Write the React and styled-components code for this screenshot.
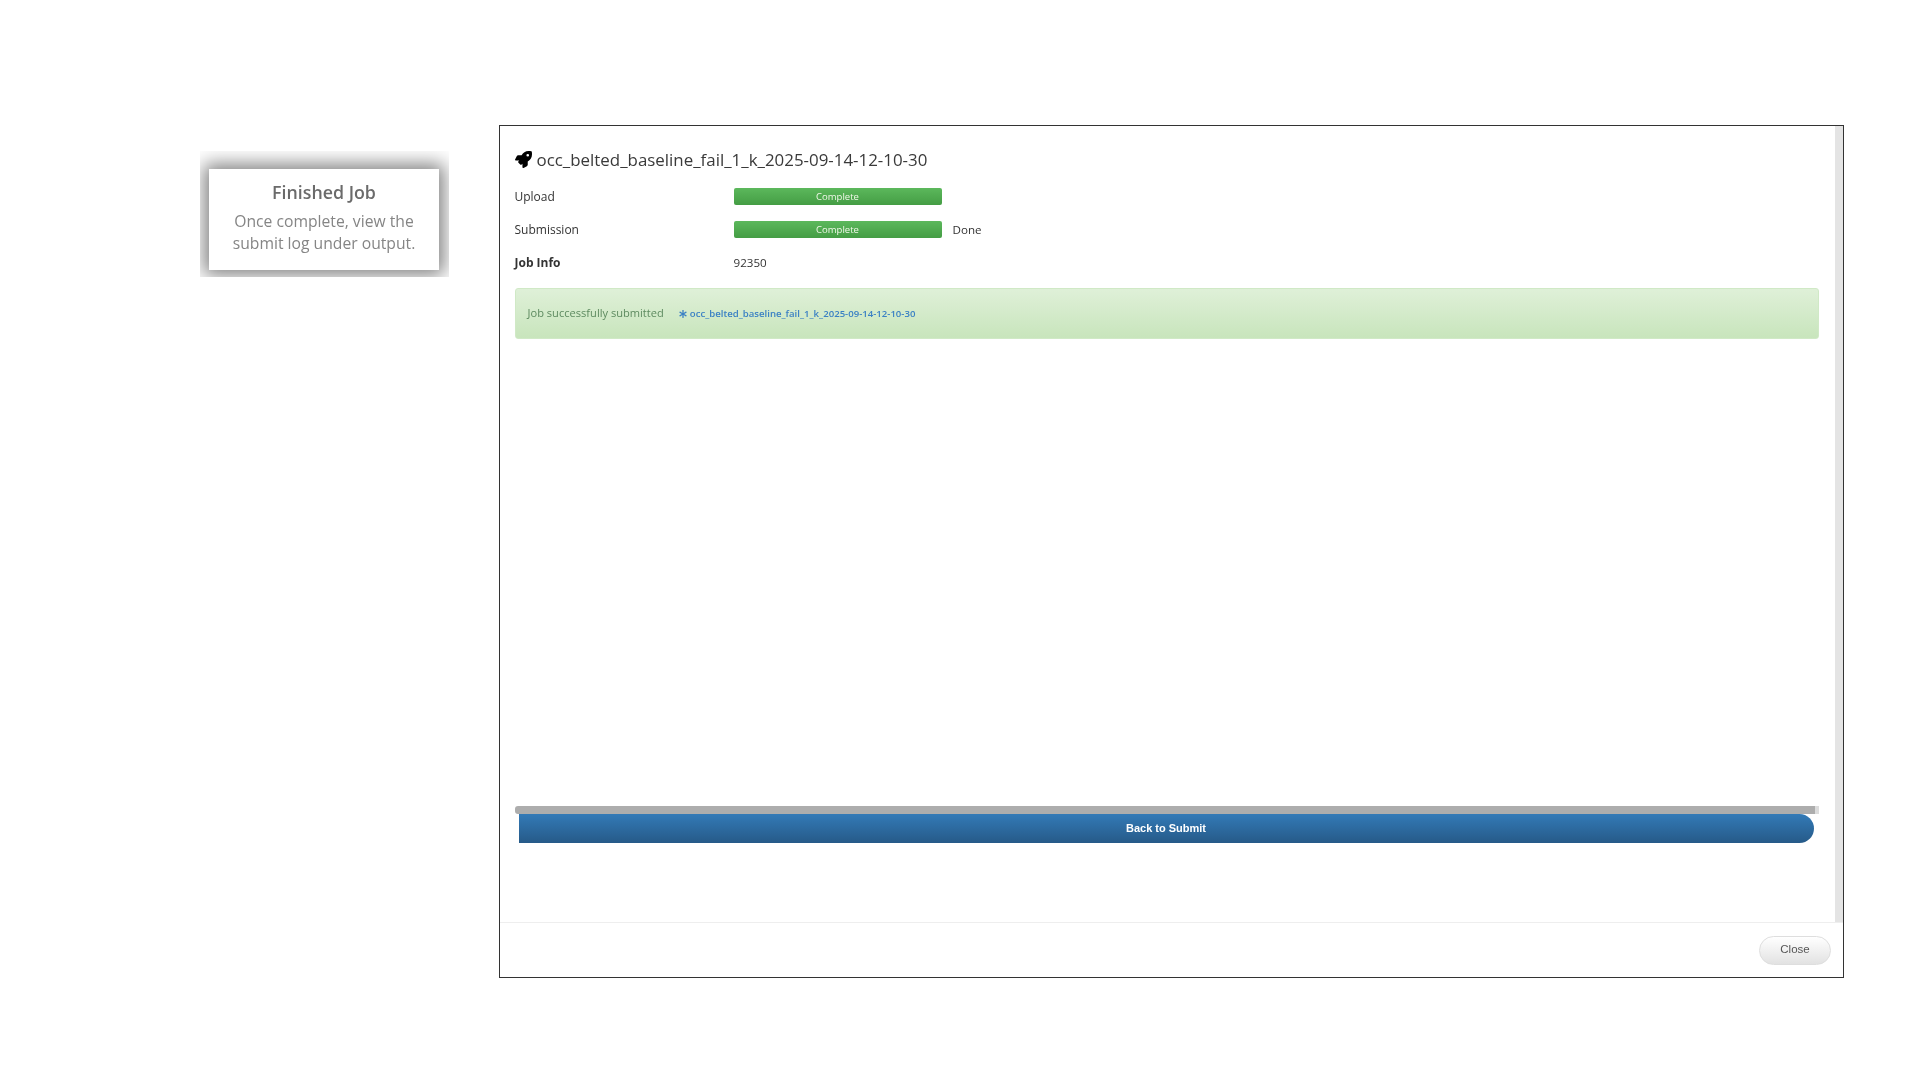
import React from "react"
import styled, { createGlobalStyle } from "styled-components"
import { FaRocket, FaAsterisk } from "react-icons/fa"

const GlobalStyle = createGlobalStyle`
    html, body {
        margin: 0;
        padding: 0;
        background: #fff;
    }
    * {
        box-sizing: border-box;
    }
`

const Page = styled.div`
    display: flex;
    align-items: flex-start;
    gap: 49.5px;
    width: 1920px;
    height: 1080px;
    padding: 125px 0 0 200px;
    font-family: "Open Sans", "Noto Sans", sans-serif;
    color: #333;
    filter: blur(0.5px);
`

const CalloutClip = styled.div`
    width: 249px;
    height: 126px;
    margin-top: 26px;
    padding: 18px 10px 7px 9px;
    overflow: hidden;
`

const Callout = styled.div`
    height: 101px;
    padding-top: 11px;
    background: #fff;
    text-align: center;
    box-shadow: 0 0 18px 5px #808080;
`

const CalloutTitle = styled.div`
    font-size: 17.8px;
    line-height: 24px;
    font-weight: 600;
    color: #6b6b6b;
    margin-bottom: 6px;
`

const CalloutText = styled.div`
    font-size: 15.7px;
    line-height: 22px;
    color: #858585;
`

const Frame = styled.div`
    display: flex;
    flex-direction: column;
    width: 1345.5px;
    height: 853px;
    border: 1.5px solid #333;
    background: #fff;
`

const Body = styled.div`
    flex: 1;
    display: flex;
    min-height: 0;
`

const Content = styled.div`
    flex: 1;
    display: flex;
    flex-direction: column;
    padding: 20px 16.5px 79px 15px;
`

const ScrollTrack = styled.div`
    width: 8px;
    background: #e4e4e4;
`

const Title = styled.h4`
    display: flex;
    align-items: center;
    gap: 5px;
    margin: 0 0 16px;
    height: 26px;
    font-size: 16.9px;
    font-weight: 400;
    color: #3a3a3a;
`

const Rocket = styled(FaRocket)`
    width: 17px;
    height: 17px;
    color: #000;
`

const InfoRow = styled.div`
    display: grid;
    grid-template-columns: 219px 208px auto;
    align-items: center;
    height: 17px;
    margin-bottom: 16px;
    font-size: 12px;
    font-weight: ${({ $bold }) => ($bold ? 700 : 400)};
`

const RowValue = styled.div`
    font-size: 11.6px;
    font-weight: 400;
`

const Progress = styled.div`
    height: 17px;
    border-radius: 2px;
    background: linear-gradient(to bottom, #5cb85c, #449d44);
    color: #f1f8e9;
    font-size: 9.5px;
    line-height: 17px;
    text-align: center;
`

const Status = styled.div`
    padding-left: 11px;
    font-size: 11.6px;
`

const Alert = styled.div`
    display: flex;
    align-items: center;
    gap: 15px;
    height: 51px;
    margin-top: 1px;
    padding: 0 12px 2px;
    border: 1px solid #d0e9c6;
    border-radius: 3px;
    background: linear-gradient(to bottom, #dff0d8, #c8e5bc);
    color: #5d8a5f;
    font-size: 11.1px;
`

const JobLink = styled.a`
    display: flex;
    align-items: center;
    gap: 3px;
    padding-top: 2px;
    color: #3a80c4;
    font-size: 9.6px;
    font-weight: 600;
    text-decoration: none;
`

const LinkIcon = styled(FaAsterisk)`
    width: 8px;
    height: 8px;
`

const BackGroup = styled.div`
    display: flex;
    flex-direction: column;
    margin-top: auto;
`

const ProgressRail = styled.div`
    height: 8px;
    border-radius: 3px 0 0 3px;
    background: linear-gradient(to right, #adadad 99.7%, #dcdcdc 99.7%);
`

const BackButton = styled.button`
    height: 29px;
    margin: 0 5px 0 4px;
    padding: 0 0 2px;
    border: none;
    border-radius: 0 15px 15px 0;
    background: linear-gradient(to bottom, #337ab7, #265a88);
    color: #fff;
    font-family: "Liberation Sans", Arial, sans-serif;
    font-size: 11px;
    font-weight: 700;
`

const Footer = styled.div`
    display: flex;
    align-items: center;
    justify-content: flex-end;
    height: 55px;
    padding: 0 12px 0 0;
    border-top: 1px solid #eeeeee;
`

const CloseButton = styled.button`
    width: 72px;
    height: 29px;
    padding: 0 0 2px;
    border: 1px solid #dedede;
    border-radius: 15px;
    background: linear-gradient(to bottom, #ffffff, #e2e2e2);
    color: #555;
    font-family: "Liberation Sans", Arial, sans-serif;
    font-size: 11.5px;
`

const JOB_NAME = "occ_belted_baseline_fail_1_k_2025-09-14-12-10-30"

export default function App() {
    return (
        <>
            <GlobalStyle />
            <Page>
                <CalloutClip>
                    <Callout>
                        <CalloutTitle>Finished Job</CalloutTitle>
                        <CalloutText>
                            Once complete, view the
                            <br />
                            submit log under output.
                        </CalloutText>
                    </Callout>
                </CalloutClip>
                <Frame>
                    <Body>
                        <Content>
                            <Title>
                                <Rocket />
                                {JOB_NAME}
                            </Title>
                            <InfoRow>
                                <div>Upload</div>
                                <Progress>Complete</Progress>
                            </InfoRow>
                            <InfoRow>
                                <div>Submission</div>
                                <Progress>Complete</Progress>
                                <Status>Done</Status>
                            </InfoRow>
                            <InfoRow $bold>
                                <div>Job Info</div>
                                <RowValue>92350</RowValue>
                            </InfoRow>
                            <Alert>
                                Job successfully submitted
                                <JobLink href="#">
                                    <LinkIcon />
                                    {JOB_NAME}
                                </JobLink>
                            </Alert>
                            <BackGroup>
                                <ProgressRail />
                                <BackButton>Back to Submit</BackButton>
                            </BackGroup>
                        </Content>
                        <ScrollTrack />
                    </Body>
                    <Footer>
                        <CloseButton>Close</CloseButton>
                    </Footer>
                </Frame>
            </Page>
        </>
    )
}
